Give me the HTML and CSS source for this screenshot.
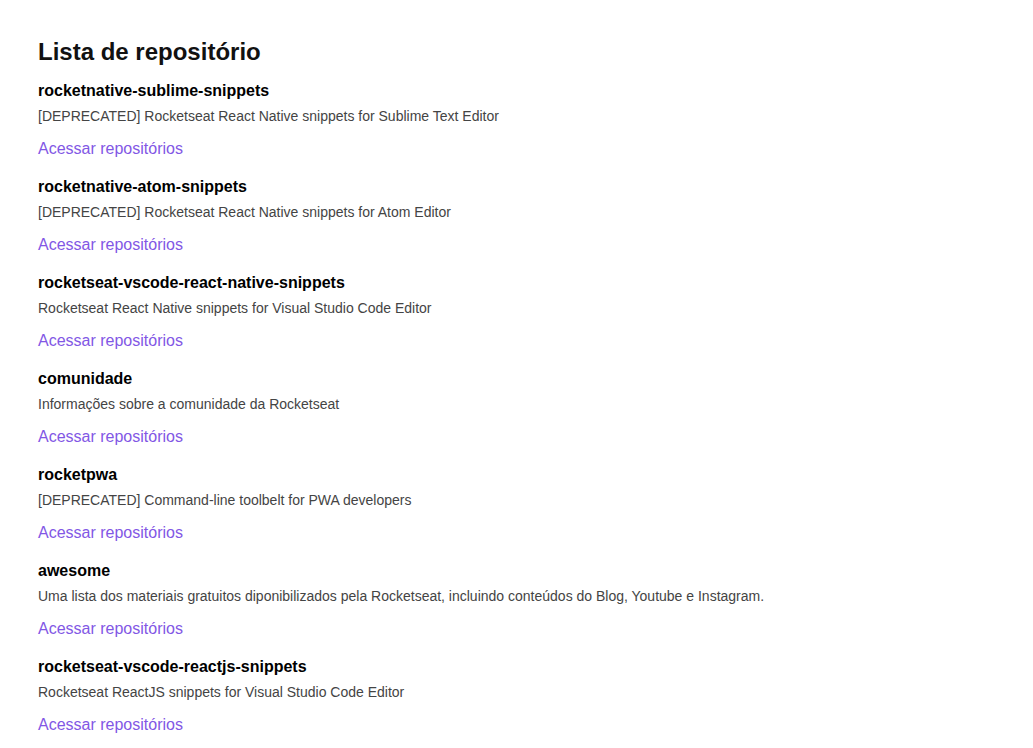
FILE: index.html
```html
<!DOCTYPE html>
<html lang="pt-BR">
<head>
<meta charset="utf-8">
<title>Lista de repositório</title>
<link rel="stylesheet" href="styles.css">
</head>
<body>
<main class="page">
  <h1 class="page-title">Lista de repositório</h1>
  <ul class="repo-list">
    <li class="repo">
      <strong class="repo-name">rocketnative-sublime-snippets</strong>
      <p class="repo-desc">[DEPRECATED] Rocketseat React Native snippets for Sublime Text Editor</p>
      <a class="repo-link" href="#">Acessar repositórios</a>
    </li>
    <li class="repo">
      <strong class="repo-name">rocketnative-atom-snippets</strong>
      <p class="repo-desc">[DEPRECATED] Rocketseat React Native snippets for Atom Editor</p>
      <a class="repo-link" href="#">Acessar repositórios</a>
    </li>
    <li class="repo">
      <strong class="repo-name">rocketseat-vscode-react-native-snippets</strong>
      <p class="repo-desc">Rocketseat React Native snippets for Visual Studio Code Editor</p>
      <a class="repo-link" href="#">Acessar repositórios</a>
    </li>
    <li class="repo">
      <strong class="repo-name">comunidade</strong>
      <p class="repo-desc">Informações sobre a comunidade da Rocketseat</p>
      <a class="repo-link" href="#">Acessar repositórios</a>
    </li>
    <li class="repo">
      <strong class="repo-name">rocketpwa</strong>
      <p class="repo-desc">[DEPRECATED] Command-line toolbelt for PWA developers</p>
      <a class="repo-link" href="#">Acessar repositórios</a>
    </li>
    <li class="repo">
      <strong class="repo-name">awesome</strong>
      <p class="repo-desc">Uma lista dos materiais gratuitos diponibilizados pela Rocketseat, incluindo conteúdos do Blog, Youtube e Instagram.</p>
      <a class="repo-link" href="#">Acessar repositórios</a>
    </li>
    <li class="repo">
      <strong class="repo-name">rocketseat-vscode-reactjs-snippets</strong>
      <p class="repo-desc">Rocketseat ReactJS snippets for Visual Studio Code Editor</p>
      <a class="repo-link" href="#">Acessar repositórios</a>
    </li>
  </ul>
</main>
</body>
</html>
```

FILE: styles.css
```css
* {
  box-sizing: border-box;
}

body {
  margin: 0;
  background: #fff;
  font-family: "Liberation Sans", Arial, sans-serif;
  color: #000;
}

.page {
  padding: 38px 38px 0;
}

.page-title {
  margin: 0;
  font-size: 24px;
  line-height: 28px;
  font-weight: 700;
  color: #111;
}

.repo-list {
  list-style: none;
  margin: 16px 0 0;
  padding: 0;
  display: flex;
  flex-direction: column;
  gap: 20px;
}

.repo {
  display: flex;
  flex-direction: column;
  align-items: flex-start;
}

.repo-name {
  font-size: 16px;
  line-height: 18px;
  font-weight: 700;
  color: #000;
}

.repo-desc {
  margin: 8px 0 0;
  font-size: 14px;
  line-height: 16px;
  color: #444;
}

.repo-link {
  margin-top: 16px;
  font-size: 16px;
  line-height: 18px;
  color: #8257e5;
  text-decoration: none;
}
```
